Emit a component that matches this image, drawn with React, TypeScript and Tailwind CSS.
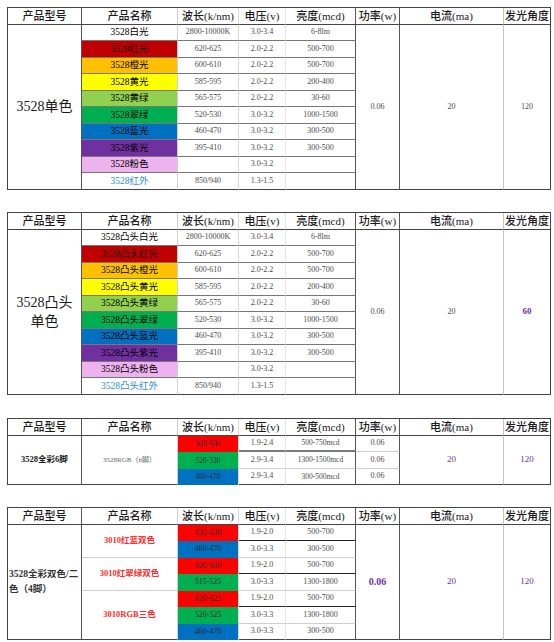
import React from "react";

const SERIF = "font-['Liberation_Serif','Noto_Sans_CJK_SC',serif]";

const RB = [
  "border-r-[#555555]",
  "border-r-[#cfcfcf]",
  "border-r-[#d9d9d9]",
  "border-r-[#e4e4e4]",
  "border-r-[#555555]",
  "border-r-[#555555]",
  "border-r-[#c4c4c4]",
  "border-r-[#444444]",
];
const BB_HEAD = "border-b-[#444444]";
const BB_ROW = "border-b-[#777777]";
const BB_LAST = "border-b-[#444444]";
const BB_LIGHT = "border-b-[#cfcfcf]";
const BB_DARK = "border-b-[#222222]";

function C({ children, className = "" }: { children?: React.ReactNode; className?: string }) {
  return (
    <div
      className={`flex items-center justify-center overflow-hidden whitespace-nowrap border-r border-b ${className}`}
    >
      {children}
    </div>
  );
}

const HEADS = ["产品型号", "产品名称", "波长(k/nm)", "电压(v)", "亮度(mcd)", "功率(w)", "电流(ma)", "发光角度"];

function Header() {
  return (
    <>
      {HEADS.map((h, i) => (
        <C key={h} className={`${RB[i]} ${BB_HEAD} text-[11px] font-medium text-[#1a1a1a]`}>
          {h}
        </C>
      ))}
    </>
  );
}

const GRID =
  "grid grid-cols-[74px_96px_61px_47px_70px_44px_104px_47px] auto-rows-[16.5px] border-l border-t border-[#444444] w-fit bg-white";

type MonoRow = { name: string; bg: string; text: string; wave: string; v: string; l: string };

const MONO: MonoRow[] = [
  { name: "白光", bg: "bg-white", text: "text-black", wave: "2800-10000K", v: "3.0-3.4", l: "6-8lm" },
  { name: "红光", bg: "bg-[#c00000]", text: "text-[#1a0000]", wave: "620-625", v: "2.0-2.2", l: "500-700" },
  { name: "橙光", bg: "bg-[#ffc000]", text: "text-black", wave: "600-610", v: "2.0-2.2", l: "500-700" },
  { name: "黄光", bg: "bg-[#ffff00]", text: "text-black", wave: "585-595", v: "2.0-2.2", l: "200-400" },
  { name: "黄绿", bg: "bg-[#92d050]", text: "text-black", wave: "565-575", v: "2.0-2.2", l: "30-60" },
  { name: "翠绿", bg: "bg-[#00b050]", text: "text-black", wave: "520-530", v: "3.0-3.2", l: "1000-1500" },
  { name: "蓝光", bg: "bg-[#0070c0]", text: "text-black", wave: "460-470", v: "3.0-3.2", l: "300-500" },
  { name: "紫光", bg: "bg-[#7030a0]", text: "text-black", wave: "395-410", v: "3.0-3.2", l: "300-500" },
  { name: "粉色", bg: "bg-[#eeb2ee]", text: "text-black", wave: "", v: "3.0-3.2", l: "" },
  { name: "红外", bg: "bg-white", text: "text-[#2f8ad6]", wave: "850/940", v: "1.3-1.5", l: "" },
];

function MonoTable({
  prefix,
  label,
  angle,
  className = "",
}: {
  prefix: string;
  label: React.ReactNode;
  angle: React.ReactNode;
  className?: string;
}) {
  const cells: React.ReactNode[] = [];
  MONO.forEach((r, i) => {
    const bb = i === MONO.length - 1 ? BB_LAST : BB_ROW;
    if (i === 0) {
      cells.push(
        <C key="label" className={`row-span-10 ${RB[0]} ${BB_LAST} text-[14px] leading-[19px] text-[#1a1a1a] whitespace-normal text-center`}>
          {label}
        </C>
      );
    }
    cells.push(
      <C key={`n${i}`} className={`${RB[1]} ${bb} ${r.bg} ${r.text} text-[9.5px]`}>
        {prefix}
        {r.name}
      </C>
    );
    cells.push(
      <C key={`w${i}`} className={`${RB[2]} ${bb} text-[8px] text-[#4a4a4a]`}>
        {r.wave}
      </C>
    );
    cells.push(
      <C key={`v${i}`} className={`${RB[3]} ${bb} text-[8px] text-[#4a4a4a]`}>
        {r.v}
      </C>
    );
    cells.push(
      <C key={`l${i}`} className={`${RB[4]} ${bb} text-[8px] text-[#4a4a4a]`}>
        {r.l}
      </C>
    );
    if (i === 0) {
      cells.push(
        <C key="p" className={`row-span-10 ${RB[5]} ${BB_LAST} text-[8px] text-[#4a4a4a]`}>
          0.06
        </C>
      );
      cells.push(
        <C key="c" className={`row-span-10 ${RB[6]} ${BB_LAST} text-[8px] text-[#4a4a4a]`}>
          20
        </C>
      );
      cells.push(
        <C key="a" className={`row-span-10 ${RB[7]} ${BB_LAST}`}>
          {angle}
        </C>
      );
    }
  });
  return (
    <div className={`${GRID} ${className}`}>
      <Header />
      {cells}
    </div>
  );
}

function RgbTable({ className = "" }: { className?: string }) {
  const rows = [
    { bg: "bg-[#ff0000]", wave: "620-630", v: "1.9-2.4", l: "500-750mcd", bb: "border-b-2 border-b-[#7a7a7a]" },
    { bg: "bg-[#00b050]", wave: "520-530", v: "2.9-3.4", l: "1300-1500mcd", bb: BB_LIGHT },
    { bg: "bg-[#0070c0]", wave: "460-470", v: "2.9-3.4", l: "300-500mcd", bb: BB_LAST },
  ];
  const cells: React.ReactNode[] = [];
  rows.forEach((r, i) => {
    if (i === 0) {
      cells.push(
        <C key="label" className={`row-span-3 ${RB[0]} ${BB_LAST} text-[8.5px] font-bold text-[#1a1a1a]`}>
          3528全彩6脚
        </C>
      );
      cells.push(
        <C key="name" className={`row-span-3 ${RB[1]} ${BB_LAST} text-[7px] text-[#666666]`}>
          3528RGB（6脚）
        </C>
      );
    }
    cells.push(
      <C key={`w${i}`} className={`border-b-0 ${RB[2]} ${r.bg} text-[7.5px] text-[#2a2a2a]`}>
        {r.wave}
      </C>
    );
    cells.push(
      <C key={`v${i}`} className={`${RB[3]} ${r.bb} text-[8px] text-[#4a4a4a]`}>
        {r.v}
      </C>
    );
    cells.push(
      <C key={`l${i}`} className={`${RB[4]} ${r.bb} text-[7.5px] text-[#4a4a4a]`}>
        {r.l}
      </C>
    );
    cells.push(
      <C key={`p${i}`} className={`${RB[5]} ${i === 2 ? BB_LAST : BB_LIGHT} text-[8px] text-[#4a4a4a]`}>
        0.06
      </C>
    );
    if (i === 0) {
      cells.push(
        <C key="c" className={`row-span-3 ${RB[6]} ${BB_LAST} text-[9px] text-[#7030a0]`}>
          20
        </C>
      );
      cells.push(
        <C key="a" className={`row-span-3 ${RB[7]} ${BB_LAST} text-[9px] text-[#7030a0]`}>
          120
        </C>
      );
    }
  });
  return (
    <div className={`${GRID} ${className}`}>
      <Header />
      {cells}
    </div>
  );
}

function DualTable({ className = "" }: { className?: string }) {
  const rows = [
    { bg: "bg-[#ff0000]", wave: "620-630", v: "1.9-2.0", l: "500-700", bb: BB_DARK },
    { bg: "bg-[#0070c0]", wave: "460-470", v: "3.0-3.3", l: "300-500", bb: BB_LIGHT },
    { bg: "bg-[#ff0000]", wave: "620-630", v: "1.9-2.0", l: "500-700", bb: BB_DARK },
    { bg: "bg-[#00b050]", wave: "515-525", v: "3.0-3.3", l: "1300-1800", bb: BB_LIGHT },
    { bg: "bg-[#ff0000]", wave: "620-625", v: "1.9-2.0", l: "500-700", bb: BB_DARK },
    { bg: "bg-[#00b050]", wave: "520-525", v: "3.0-3.3", l: "1300-1800", bb: BB_LIGHT },
    { bg: "bg-[#0070c0]", wave: "460-470", v: "3.0-3.3", l: "300-500", bb: BB_LAST },
  ];
  const nameCls = `${RB[1]} text-[8.5px] font-bold text-[#ff2b2b]`;
  const cells: React.ReactNode[] = [];
  rows.forEach((r, i) => {
    if (i === 0) {
      cells.push(
        <div
          key="label"
          className={`row-span-7 flex flex-col justify-center overflow-hidden whitespace-nowrap border-r border-b ${RB[0]} ${BB_LAST} pl-px text-[9.5px] leading-[15px] font-bold text-[#333333]`}
        >
          <span>3528全彩双色/二</span>
          <span>色（4脚）</span>
        </div>
      );
      cells.push(
        <C key="n0" className={`row-span-2 ${nameCls} ${BB_LIGHT}`}>
          3010红蓝双色
        </C>
      );
    }
    if (i === 2) {
      cells.push(
        <C key="n1" className={`row-span-2 ${nameCls} ${BB_LIGHT}`}>
          3010红翠绿双色
        </C>
      );
    }
    if (i === 4) {
      cells.push(
        <C key="n2" className={`row-span-3 ${nameCls} ${BB_LAST}`}>
          3010RGB三色
        </C>
      );
    }
    cells.push(
      <C key={`w${i}`} className={`border-b-0 ${RB[2]} ${r.bg} text-[8px] text-[#2a2a2a]`}>
        {r.wave}
      </C>
    );
    cells.push(
      <C key={`v${i}`} className={`${RB[3]} ${r.bb} text-[8px] text-[#4a4a4a]`}>
        {r.v}
      </C>
    );
    cells.push(
      <C key={`l${i}`} className={`${RB[4]} ${r.bb} text-[8px] text-[#4a4a4a]`}>
        {r.l}
      </C>
    );
    if (i === 0) {
      cells.push(
        <C key="p" className={`row-span-7 ${RB[5]} ${BB_LAST} text-[10px] font-bold text-[#7030a0]`}>
          0.06
        </C>
      );
      cells.push(
        <C key="c" className={`row-span-7 ${RB[6]} ${BB_LAST} text-[9px] text-[#7030a0]`}>
          20
        </C>
      );
      cells.push(
        <C key="a" className={`row-span-7 ${RB[7]} ${BB_LAST} text-[9px] text-[#7030a0]`}>
          120
        </C>
      );
    }
  });
  return (
    <div className={`${GRID} ${className}`}>
      <Header />
      {cells}
    </div>
  );
}

export default function App() {
  return (
    <div className={`w-[554px] min-h-[642px] bg-white pl-[7px] pt-[7px] flex flex-col ${SERIF}`}>
      <MonoTable prefix="3528" label="3528单色" angle={<span className="text-[8px] text-[#4a4a4a]">120</span>} />
      <MonoTable
        className="mt-[22.5px]"
        prefix="3528凸头"
        label={
          <span className="flex flex-col items-center">
            <span>3528凸头</span>
            <span>单色</span>
          </span>
        }
        angle={<span className="text-[9px] font-bold text-[#7030a0]">60</span>}
      />
      <RgbTable className="mt-[23.5px]" />
      <DualTable className="mt-[22px]" />
    </div>
  );
}
